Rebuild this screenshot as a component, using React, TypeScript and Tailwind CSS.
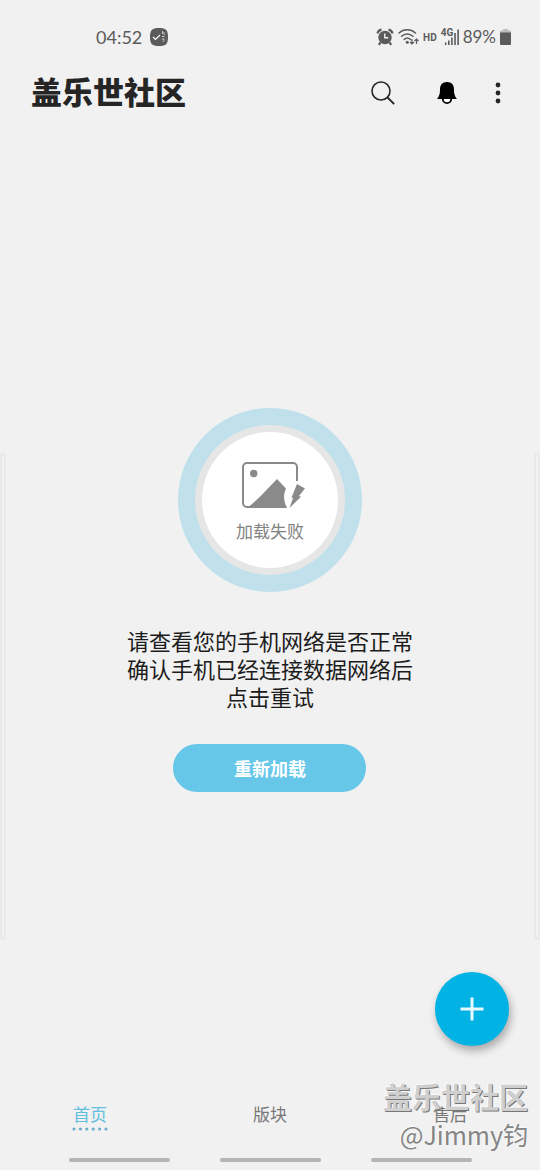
import React from "react";
import clsx from "clsx";

const tabs = [
  { id: "home", label: "首页" },
  { id: "boards", label: "版块" },
  { id: "support", label: "售后" },
];

const NoteIcon = () => (
  <svg viewBox="0 0 18 18" className="h-[18px] w-[18px]" aria-hidden="true">
    <path d="M9 0c7 0 9 2 9 9s-2 9-9 9-9-2-9-9 2-9 9-9Z" fill="#5b5b5b" />
    <path d="m3 9 2.5 2.5L10 7" fill="none" stroke="#fff" strokeWidth="1.2" />
    <path d="M12.5 3v3M14 4v3M12 8.5h2.5M12 11h2v1.500l-1.500 1.500" fill="none" stroke="#d0d0d0" strokeWidth="0.9" />
  </svg>
);

const AlarmIcon = () => (
  <svg viewBox="0 0 18 18" className="h-[18px] w-[18px]" aria-hidden="true">
    <path d="M1.500 5.500A5 5 0 0 1 5.500 1.700M16.500 5.500a5 5 0 0 0-4-3.800M4.500 14.500l-1.700 2.300M13.500 14.500l1.700 2.300" fill="none" stroke="#5b5b5b" strokeWidth="2.200" />
    <circle cx="9" cy="9.500" r="6.700" fill="#5b5b5b" />
    <path d="M8.800 5.500v4.300h3.500" fill="none" stroke="#f1f1f1" strokeWidth="1.400" />
  </svg>
);

const WifiIcon = () => (
  <svg viewBox="0 0 21 18" className="h-[18px] w-[21px]" aria-hidden="true">
    <g fill="none" stroke="#5b5b5b" strokeWidth="1.500" strokeLinecap="round">
      <path d="M1 5a12 12 0 0 1 16.500 0M3.600 8.300a8 8 0 0 1 11.300 0M6.300 11.400a4.500 4.500 0 0 1 6 0" />
    </g>
    <circle cx="9.300" cy="14.300" r="1.500" fill="#5b5b5b" />
    <path d="M14 11v5m-2-2 2 2 2-2M18.500 16v-5m-2 2 2-2 2 2" fill="none" stroke="#5b5b5b" strokeWidth="1.200" />
  </svg>
);

const SignalIcon = () => (
  <svg viewBox="0 0 18 18" className="h-[18px] w-[18px]" aria-hidden="true">
    <path d="M4.700 17v-2.500M7.800 17v-4.500M10.900 17V9.500M14 17V5M17.100 17V1.500" stroke="#5b5b5b" strokeWidth="1.600" />
  </svg>
);

const BatteryIcon = () => (
  <svg viewBox="0 0 11 18" className="h-[18px] w-[11px]" aria-hidden="true">
    <path d="M3 1h5v1.500h2a1 1 0 0 1 1 1V5H0V3.500a1 1 0 0 1 1-1h2Z" fill="#bdbdbd" />
    <path d="M0 4.500h11V16a1 1 0 0 1-1 1H1a1 1 0 0 1-1-1Z" fill="#5b5b5b" />
  </svg>
);

const SearchIcon = () => (
  <svg viewBox="0 0 24 24" className="h-6 w-6" fill="none" stroke="#252525" aria-hidden="true">
    <circle cx="10" cy="10" r="9" strokeWidth="1.600" />
    <path d="m16.500 16.500 6.700 6.700" strokeWidth="1.800" />
  </svg>
);

const BellIcon = () => (
  <svg viewBox="0 0 20 24" className="h-6 w-5" aria-hidden="true">
    <circle cx="10" cy="18" r="4.200" fill="#fff" stroke="#000" strokeWidth="1.800" />
    <path d="M10 1c4.800 0 7 3 7 7.500 0 4.500.700 6.500 3 9.500H0c2.300-3 3-5 3-9.500C3 4 5.200 1 10 1Z" fill="#000" />
  </svg>
);

const MoreIcon = () => (
  <svg viewBox="0 0 6 22" className="h-[22px] w-[6px]" fill="#252525" aria-hidden="true">
    <circle cx="3" cy="3" r="2.400" />
    <circle cx="3" cy="11" r="2.400" />
    <circle cx="3" cy="19" r="2.400" />
  </svg>
);

const BrokenImageIcon = () => (
  <svg viewBox="0 0 64 46" className="h-[46px] w-16" aria-hidden="true">
    <path d="M55 19V5a4 4 0 0 0-4-4H5a4 4 0 0 0-4 4v36a4 4 0 0 0 4 4h4" fill="none" stroke="#8a8a8a" strokeWidth="2" />
    <circle cx="11.700" cy="11.500" r="3.700" fill="#8a8a8a" />
    <path d="M5 46C18 36 25 27 35 17l9 9.500c-3 7-2.500 12 1 19.500Z" fill="#8a8a8a" />
    <path d="m55 22 8 4.500-6 7.500 2 .700L47.500 46l3.500-10-1.500-.500Z" fill="#8a8a8a" />
  </svg>
);

const StatusBar = () => (
  <div className="flex h-[66px] items-start pt-6 pr-[29px] pl-24 text-[#5b5b5b]">
    <div className="flex h-[26px] items-center gap-2">
      <span className="font-['Lato'] text-lg">04:52</span>
      <NoteIcon />
    </div>
    <div className="ml-auto flex h-[26px] items-center gap-1">
      <AlarmIcon />
      <WifiIcon />
      <span className="font-['Roboto'] text-[10px] font-bold">HD</span>
      <div className="relative">
        <SignalIcon />
        <span className="absolute top-0 left-0 font-['Roboto'] text-[10px] leading-none font-bold">4G</span>
      </div>
      <span className="font-['Lato'] text-[17px]">89%</span>
      <BatteryIcon />
    </div>
  </div>
);

const Header = () => (
  <header className="flex h-[54px] items-center pr-[37px] pl-[31px]">
    <h1 className="pb-[5px] text-[31px] leading-none font-black text-[#252525]">盖乐世社区</h1>
    <div className="ml-auto flex items-center">
      <button type="button" aria-label="搜索">
        <SearchIcon />
      </button>
      <button type="button" aria-label="通知" className="ml-[42px]">
        <BellIcon />
      </button>
      <button type="button" aria-label="更多" className="ml-9 flex w-[10px] justify-center">
        <MoreIcon />
      </button>
    </div>
  </header>
);

const LoadError = () => (
  <section className="flex flex-col items-center">
    <div className="rounded-full bg-[#c0e1ec] p-[17px]">
      <div className="rounded-full bg-[#e6e6e6] p-[7px]">
        <div className="flex h-[136px] w-[136px] flex-col items-center rounded-full bg-white pt-[30px]">
          <div className="pl-2">
            <BrokenImageIcon />
          </div>
          <p className="mt-[11px] text-[17px] leading-6 text-[#828282]">加载失败</p>
        </div>
      </div>
    </div>
    <p className="mt-[34px] text-center text-[22px] leading-7 text-[#1c1c1c]">
      请查看您的手机网络是否正常
      <br />
      确认手机已经连接数据网络后
      <br />
      点击重试
    </p>
    <button
      type="button"
      className="mt-[34px] h-12 w-[193px] rounded-full bg-[#66c7e9] text-lg font-bold text-white"
    >
      重新加载
    </button>
  </section>
);

const TabBar = ({ active }: { active: string }) => (
  <nav className="grid h-[70px] grid-cols-3 text-[17px]">
    {tabs.map((tab) => (
      <a
        key={tab.id}
        href={`#${tab.id}`}
        className={clsx(
          "flex flex-col items-center pt-[22px] leading-6",
          tab.id === active ? "text-[#62bfe0]" : "text-[#777]"
        )}
      >
        {tab.label}
        {tab.id === active && (
          <svg viewBox="0 0 36 4" className="mt-px h-1 w-9" fill="#6cafca" aria-hidden="true">
            {[2, 8.4, 14.8, 21.2, 27.6, 34].map((x) => (
              <circle key={x} cx={x} cy="2" r="1.600" />
            ))}
          </svg>
        )}
      </a>
    ))}
  </nav>
);

const GestureHints = () => (
  <div className="flex h-5 justify-center gap-[50px] pt-2">
    <div className="h-1 w-[101px] rounded-full bg-[#b4b4b4]" />
    <div className="h-1 w-[101px] rounded-full bg-[#b4b4b4]" />
    <div className="h-1 w-[101px] rounded-full bg-[#b4b4b4]" />
  </div>
);

const Watermark = () => (
  <div className="pointer-events-none absolute right-3 bottom-[18px] text-right">
    <p className="text-[29px] leading-10 font-bold text-[#cfcfcf] [text-shadow:1px_1px_0_#777,-1px_-1px_0_#fafafa]">
      盖乐世社区
    </p>
    <p className="text-[25px] leading-9 text-[#858585] [text-shadow:-1px_-1px_0_#fafafa]">@Jimmy钧</p>
  </div>
);

export default function App() {
  return (
    <div className="relative flex min-h-screen flex-col bg-[#f1f1f1] font-['Noto_Sans_CJK_SC',sans-serif]">
      <StatusBar />
      <Header />
      <main className="relative flex flex-1 flex-col items-center justify-center">
        <LoadError />
        <div className="absolute top-[333px] bottom-[140px] left-0 w-[6px] rounded-full border-2 border-[#e9e9e9]" />
        <div className="absolute top-[333px] right-0 bottom-[140px] w-[6px] rounded-full border-2 border-[#e9e9e9]" />
        <button
          type="button"
          aria-label="发帖"
          className="absolute right-[31px] bottom-[34px] flex h-[74px] w-[74px] items-center justify-center rounded-full bg-[#00b3e4] shadow-[2px_5px_9px_rgba(0,0,0,0.3)]"
        >
          <svg viewBox="0 0 24 24" className="h-6 w-6" stroke="#e8faff" strokeWidth="3" aria-hidden="true">
            <path d="M12 0.500v23M0.500 12h23" />
          </svg>
        </button>
      </main>
      <TabBar active="home" />
      <GestureHints />
      <Watermark />
    </div>
  );
}
